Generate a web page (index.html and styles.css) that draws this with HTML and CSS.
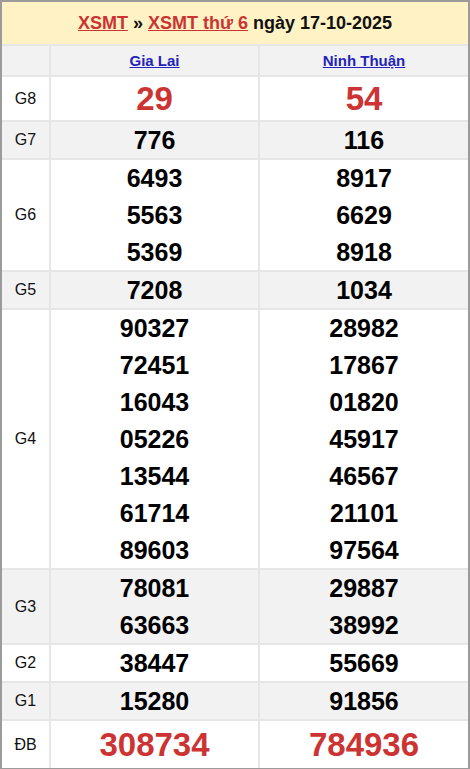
FILE: index.html
```html
<!DOCTYPE html>
<html lang="vi">
<head>
<meta charset="utf-8">
<title>XSMT thứ 6 ngày 17-10-2025</title>
<link rel="stylesheet" href="styles.css">
</head>
<body>
<div class="board">
  <div class="title">
    <a href="#" class="red-link">XSMT</a> » <a href="#" class="red-link">XSMT thứ 6</a> ngày 17-10-2025
  </div>

  <div class="cell head"></div>
  <div class="cell head"><a href="#" class="prov">Gia Lai</a></div>
  <div class="cell head"><a href="#" class="prov">Ninh Thuận</a></div>

  <div class="cell label big-row">G8</div>
  <div class="cell nums big-row"><div class="n red">29</div></div>
  <div class="cell nums big-row"><div class="n red">54</div></div>

  <div class="cell label alt">G7</div>
  <div class="cell nums alt"><div class="n">776</div></div>
  <div class="cell nums alt"><div class="n">116</div></div>

  <div class="cell label">G6</div>
  <div class="cell nums"><div class="n">6493</div><div class="n">5563</div><div class="n">5369</div></div>
  <div class="cell nums"><div class="n">8917</div><div class="n">6629</div><div class="n">8918</div></div>

  <div class="cell label alt">G5</div>
  <div class="cell nums alt"><div class="n">7208</div></div>
  <div class="cell nums alt"><div class="n">1034</div></div>

  <div class="cell label">G4</div>
  <div class="cell nums">
    <div class="n">90327</div><div class="n">72451</div><div class="n">16043</div><div class="n">05226</div><div class="n">13544</div><div class="n">61714</div><div class="n">89603</div>
  </div>
  <div class="cell nums">
    <div class="n">28982</div><div class="n">17867</div><div class="n">01820</div><div class="n">45917</div><div class="n">46567</div><div class="n">21101</div><div class="n">97564</div>
  </div>

  <div class="cell label alt">G3</div>
  <div class="cell nums alt"><div class="n">78081</div><div class="n">63663</div></div>
  <div class="cell nums alt"><div class="n">29887</div><div class="n">38992</div></div>

  <div class="cell label">G2</div>
  <div class="cell nums"><div class="n">38447</div></div>
  <div class="cell nums"><div class="n">55669</div></div>

  <div class="cell label alt">G1</div>
  <div class="cell nums alt"><div class="n">15280</div></div>
  <div class="cell nums alt"><div class="n">91856</div></div>

  <div class="cell label db-row">ĐB</div>
  <div class="cell nums db-row"><div class="n red">308734</div></div>
  <div class="cell nums db-row"><div class="n red">784936</div></div>
</div>
</body>
</html>
```
FILE: styles.css
```css
html, body {
  margin: 0;
  padding: 0;
  background: #ffffff;
}

body {
  font-family: "Liberation Sans", Arial, sans-serif;
  color: #000;
}

.board {
  width: 470px;
  box-sizing: border-box;
  border: 2px solid #9b9b9b;
  display: grid;
  grid-template-columns: 47px 207px 1fr;
  gap: 2px;
  background: #e6e6e6;
}

.title {
  grid-column: 1 / -1;
  background: #fff2c4;
  height: 42px;
  display: flex;
  align-items: center;
  justify-content: center;
  font-weight: bold;
  font-size: 18px;
  color: #111;
  gap: 5px;
}

.red-link {
  color: #cc3333;
  text-decoration: underline;
}

.cell {
  background: #ffffff;
  display: flex;
  flex-direction: column;
  align-items: center;
  justify-content: center;
}

.cell.alt,
.cell.head {
  background: #f2f2f2;
}

.head {
  height: 29px;
}

.prov {
  color: #2323bb;
  font-weight: bold;
  font-size: 15px;
  text-decoration: underline;
}

.label {
  font-size: 16px;
  color: #111;
}

.nums {
  gap: 1px;
}

.n {
  font-weight: bold;
  font-size: 25px;
  line-height: 36px;
  height: 36px;
}

.n.red {
  color: #cc3333;
  font-size: 33px;
}

.big-row {
  height: 43px;
}

.big-row .n {
  line-height: 43px;
  height: 43px;
}

.db-row {
  height: 47px;
}

.db-row .n {
  line-height: 47px;
  height: 47px;
}
```
